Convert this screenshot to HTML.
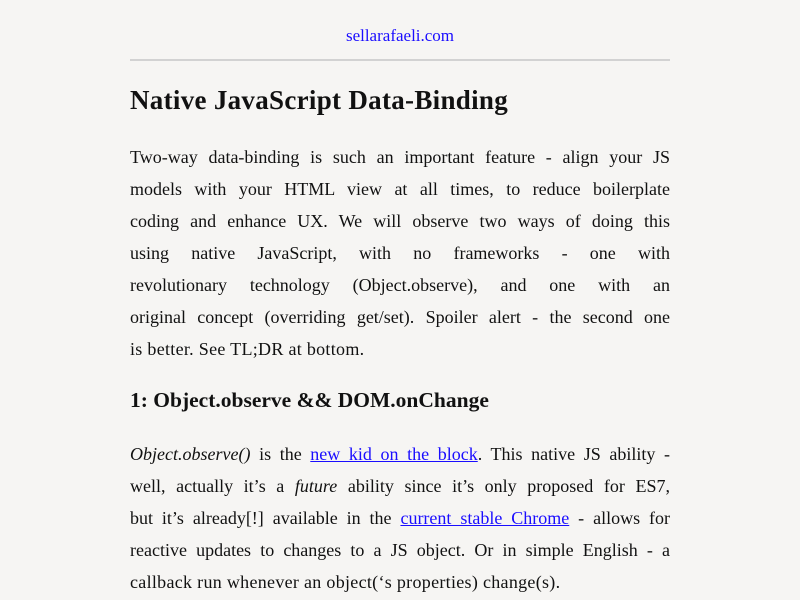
<!DOCTYPE html>
<html><head><meta charset="utf-8"><style>
body{margin:0;background:#f6f5f3;font-family:"Liberation Serif",serif;color:#111;}
.w{position:absolute;left:130px;width:540px;}
.top{position:absolute;top:26px;left:0;width:800px;text-align:center;font-size:17px;color:#1a0dff;}
hr{position:absolute;top:59px;left:130px;width:540px;margin:0;border:0;border-top:2px solid #d2d2d2;}
h1{position:absolute;top:85px;left:130px;margin:0;font-size:27px;font-weight:bold;letter-spacing:0.3px;}
h2{position:absolute;top:388px;left:130px;margin:0;font-size:21.5px;font-weight:bold;}
.l{height:32px;line-height:32px;font-size:18px;text-align:justify;text-align-last:justify;white-space:nowrap;}
.l.e{text-align-last:left;letter-spacing:0.3px;}
a{color:#1a0dff;text-decoration:underline;}
</style></head><body>
<div class="top">sellarafaeli.com</div>
<hr>
<h1>Native JavaScript Data-Binding</h1>
<div class="w" style="top:141px">
<div class="l">Two-way data-binding is such an important feature - align your JS</div>
<div class="l">models with your HTML view at all times, to reduce boilerplate</div>
<div class="l">coding and enhance UX. We will observe two ways of doing this</div>
<div class="l">using native JavaScript, with no frameworks - one with</div>
<div class="l">revolutionary technology (Object.observe), and one with an</div>
<div class="l">original concept (overriding get/set). Spoiler alert - the second one</div>
<div class="l e">is better. See TL;DR at bottom.</div>
</div>
<h2>1: Object.observe &amp;&amp; DOM.onChange</h2>
<div class="w" style="top:438px">
<div class="l"><i>Object.observe()</i> is the <a>new kid on the block</a>. This native JS ability -</div>
<div class="l">well, actually it’s a <i>future</i> ability since it’s only proposed for ES7,</div>
<div class="l">but it’s already[!] available in the <a>current stable Chrome</a> - allows for</div>
<div class="l">reactive updates to changes to a JS object. Or in simple English - a</div>
<div class="l e">callback run whenever an object(‘s properties) change(s).</div>
</div>
</body></html>
